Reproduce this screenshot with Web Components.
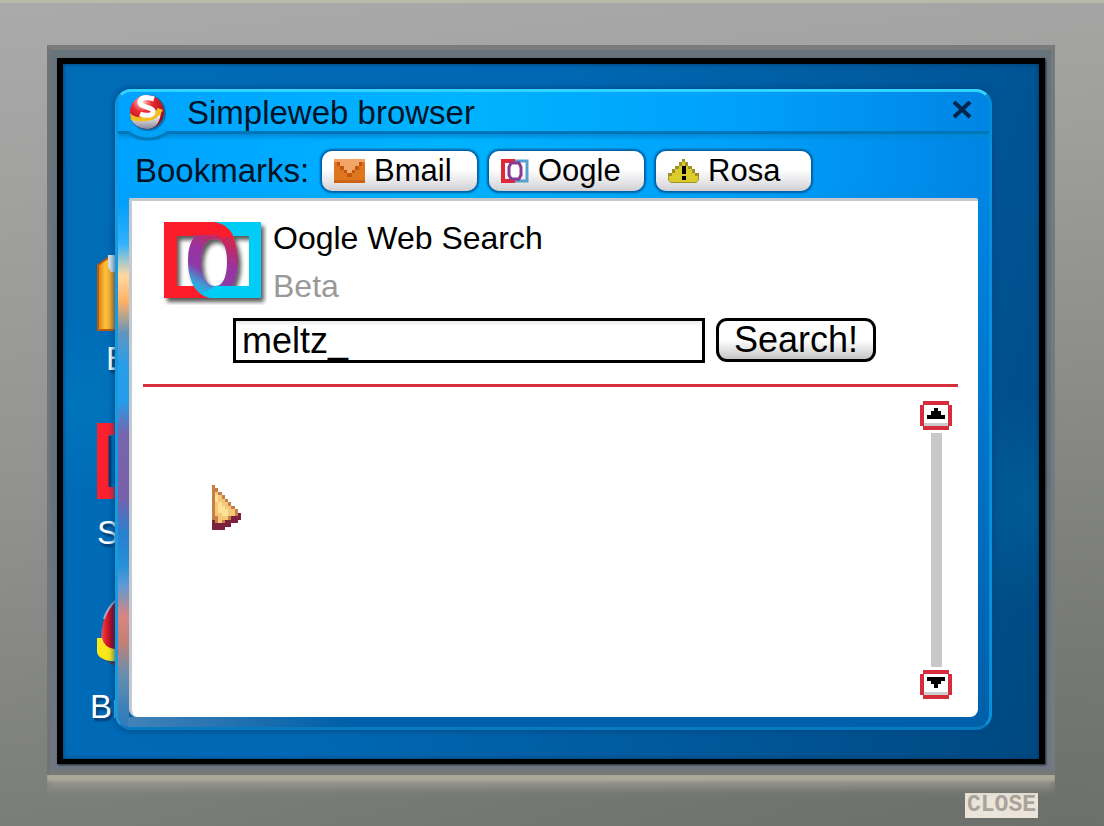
<!DOCTYPE html>
<html lang="en">
<head>
<meta charset="utf-8">
<title>Simpleweb browser</title>
<style>
  html { height: 100%; }
  body { margin: 0; min-height: 100%; display: flex; font-family: "Liberation Sans", Arial, sans-serif; color: #000; }
  retro-monitor { flex: 1; min-width: 0; }
</style>
</head>
<body>
<retro-monitor>
  <desk-top>
    <desktop-icons slot="icons"></desktop-icons>
    <browser-window heading="Simpleweb browser">
      <bookmark-link slot="bookmarks" icon="mail">Bmail</bookmark-link>
      <bookmark-link slot="bookmarks" icon="oogle">Oogle</bookmark-link>
      <bookmark-link slot="bookmarks" icon="warn">Rosa</bookmark-link>
      <oogle-search></oogle-search>
    </browser-window>
  </desk-top>
</retro-monitor>

<script>
function define(name, html, setup) {
  customElements.define(name, class extends HTMLElement {
    constructor() {
      super();
      this.attachShadow({ mode: 'open' }).innerHTML = html;
    }
    connectedCallback() { if (setup) setup(this, this.shadowRoot); }
  });
}

/* Grey monitor housing with the recessed screen and its close key */
define('retro-monitor', `
<style>
  :host { display: flex; flex-direction: column; box-sizing: border-box; padding: 42px 49px 0 47px; border-top: 3px solid #bab9ac;
    background: radial-gradient(ellipse at 90% 95%, #5f625f55, transparent 60%), linear-gradient(174deg, #aaa 0%, #a2a2a1 18%, #939492 50%, #7e807c 82%, #737571 100%); }
  .rim { flex: 1; display: flex; box-sizing: border-box; border: solid; border-width: 5px 4px; border-color: #797c7b #747b7e #767978 #707477;
    background: linear-gradient(#68747b, #64717c 60%, #6f7882); padding: 8px 6px 6px;
    box-shadow: 0 6px 2px #aaa899, 0 12px 10px #9a9a90; clip-path: inset(0 0 -26px 0); }
  .glass { flex: 1; min-width: 0; display: flex; border: 6px solid #000; border-bottom-width: 5px; box-shadow: 1px 1px 2px #1b2731; }
  footer { display: flex; justify-content: flex-end; padding: 18px 17px 8px; }
  button { border: 0; padding: 0 2px; height: 25px; background: #eae4da; color: #aaa39a; font: bold 23px/25px "Liberation Mono", monospace; }
</style>
<div class="rim"><div class="glass"><slot></slot></div></div>
<footer><button type="button">CLOSE</button></footer>`);

/* Blue wallpaper: a strip of shortcuts, then the open window */
define('desk-top', `
<style>
  :host { flex: 1; display: flex; min-width: 0; padding: 25px 47px 29px 0;
    background:
      radial-gradient(ellipse 240px 90px at 0 340px, #0088c455, transparent),
      radial-gradient(ellipse 130px 110px at 100% 440px, #0080b844, transparent),
      linear-gradient(110deg, #006cb8 0%, #0068b4 40%, #00599c 70%, #004880 100%);
    box-shadow: inset 0 0 4px #003868; }
  .icons { width: 52px; flex: none; overflow: hidden; }
  .main { flex: 1; min-width: 0; display: flex; }
</style>
<div class="icons"><slot name="icons"></slot></div>
<div class="main"><slot></slot></div>`);

define('desktop-icons', `
<style>
  :host { display: flex; flex-direction: column; padding: 164px 0 0; }
  figure { margin: 0; height: 174px; padding-left: 34px; }
  figure:last-child { height: auto; }
  svg { display: block; width: 100px; height: 84px; overflow: visible; }
  figcaption { font-size: 33px; line-height: 38px; margin-top: 3px; color: #fff; text-shadow: 2px 3px 2px #003a70; white-space: nowrap; }
  .a { padding-left: 9px; }
  .c { margin-left: -7px; }
</style>
<figure>
  <svg viewBox="0 0 100 84" aria-hidden="true">
    <defs><linearGradient id="g"><stop offset="0" stop-color="#d97812"/><stop offset=".08" stop-color="#ffc23a"/><stop offset=".2" stop-color="#ed8a18"/></linearGradient></defs>
    <path d="M1 12l10-7h80v72H1z" fill="url(#g)" stroke="#b85b0b" stroke-width="2"/>
    <path d="M11 2h70v17H14l-3-5z" fill="#dde3e8"/>
  </svg>
  <figcaption class="a">B</figcaption>
</figure>
<figure>
  <svg viewBox="0 0 100 84" aria-hidden="true"><path d="M6 2h52v64H6z" fill="none" stroke="#fa202d" stroke-width="12"/><path d="M13 9v51" stroke="#073c70" stroke-width="3"/></svg>
  <figcaption>S</figcaption>
</figure>
<figure>
  <svg viewBox="0 0 100 84" aria-hidden="true">
    <defs><linearGradient id="r"><stop offset="0" stop-color="#c95b70"/><stop offset=".12" stop-color="#e3202c"/><stop offset=".3" stop-color="#9f0018"/></linearGradient></defs>
    <path d="M18 0Q4 14 4 40v14h40V0z" fill="url(#r)"/>
    <path d="M18 0Q10 8 7 18" stroke="#9cacc6" stroke-width="2" fill="none"/>
    <path d="M0 37h5q2 10 13 11h20v12H14Q0 58 0 50z" fill="#fbe51b"/>
    <path d="M3 56q6 5 12 5h20v3H16z" fill="#7b2b14"/>
  </svg>
  <figcaption class="c">Br</figcaption>
</figure>`);

define('browser-window', `
<style>
  :host { flex: 1; min-width: 0; display: flex; flex-direction: column; box-sizing: border-box; border: 3px solid; padding: 0 11px 10px;
    border-color: #32d6ff #0890da #087abf #179be0; border-radius: 16px; box-shadow: 0 0 5px 2px #004681aa;
    background:
      linear-gradient(transparent 14%, #0078ca22 20%, #005fa8ff 100%),
      linear-gradient(90deg, #00a2ff, #00b4ff 38%, #00a0fa 72%, #0084e4); position: relative; }
  .glow { position: absolute; left: 0; top: 110px; bottom: 0; width: 11px; border-radius: 0 0 0 12px;
    background: linear-gradient(#22b0ff00 0, #32b2ff 8%, #ffd9a0 14%, #ffb066 19%, #6095bd 25%, #289eea 31%, #259cea 38%, #7566ae 44%, #7960a9 56%, #2880d0 63%, #248fd7 69%, #5d9bd5 73%, #da8580 79%, #c08078 84%, #668faf 90%, #347dba 98%); }
  .foot { position: absolute; left: 10px; bottom: 0; height: 10px; width: 220px; background: linear-gradient(90deg, #4282b8, #1a71b400); }
  header { display: flex; align-items: center; height: 39px; margin: 0 -11px; border-bottom: 3px solid #0076b8; box-shadow: 0 3px 4px #0088d6; }
  .badge { width: 44px; height: 47px; margin: 2px 0 0 8px; flex: none; align-self: flex-start; position: relative; }
  h1 { flex: 1; margin: 2px 0 0 17px; font-size: 33px; font-weight: normal; line-height: 38px; color: #001226; white-space: nowrap; }
  header button { border: 0; background: none; padding: 0; width: 20px; height: 18px; margin: 0 16px 4px 0; }
  header button svg { display: block; width: 20px; height: 18px; }
  nav { display: flex; align-items: center; gap: 12px; height: 40px; padding: 17px 0 7px 6px; white-space: nowrap; }
  nav span { font-size: 33px; color: #001226; width: 175px; }
  main { flex: 1; display: flex; border: 2px solid #c5c9ce; border-width: 3px 0 0 3px; border-radius: 2px 2px 8px 8px; background: #fff; position: relative; }
</style>
<div class="glow"></div><div class="foot"></div>
<header>
  <svg class="badge" viewBox="0 0 44 47" aria-hidden="true">
    <defs><radialGradient id="b" cx=".35" cy=".2" r=".85"><stop offset="0" stop-color="#ffe3dc"/><stop offset=".35" stop-color="#ec2832"/><stop offset="1" stop-color="#8f0715"/></radialGradient>
    <linearGradient id="w" x2="0" y2="1"><stop offset=".35" stop-color="#f3eef0"/><stop offset="1" stop-color="#85899a"/></linearGradient></defs>
    <path d="M1 35Q5 44 21 44T43 35z" fill="#00a2f6"/><path d="M2 38Q10 45 22 45T42 38" fill="none" stroke="#007bbd" stroke-width="3"/>
    <circle cx="22" cy="19" r="18" fill="#0870b3"/>
    <circle cx="21" cy="18" r="17" fill="url(#b)"/>
    <path d="M5 25q6 0 13-1 11-1 17-9 0 19-14 20Q9 34 5 25z" fill="url(#w)"/>
    <path d="M4 19q4 5 13 4 8 0 15-9l5 2q-6 11-16 11-10 1-16-1z" fill="#f6bd1e"/>
    <path d="M28 5Q15 1 14 8c0 6 14 5 13 10 0 4-8 4-13 2" fill="none" stroke="#fff" stroke-width="5"/>
  </svg>
  <h1></h1>
  <button type="button" aria-label="Close window"><svg viewBox="0 0 20 18"><path d="M1 1l16 15M17 1L1 16" stroke="#03254a" stroke-width="4"/></svg></button>
</header>
<nav aria-label="Bookmarks"><span>Bookmarks:</span><slot name="bookmarks"></slot></nav>
<main><slot></slot></main>`, (el, root) => { root.querySelector('h1').textContent = el.getAttribute('heading'); });

const icons = {
  mail: `<svg viewBox="0 0 31 24" width="31" height="24"><path fill="#dd761f" d="M0 0h31v24H0z"/><path fill="#c4560c" d="M3 3h3v4h4v4h3v3h5v-3h3V7h4V3h3v4h-3v4h-4v3h-3v4h-5v-4h-3v-3H6V7H3z"/><path fill="#f2a566" d="M0 0h31v3h-6v4h-4v4h-3v3h-5v-3h-3V7H6V3H0z"/><path fill="#b94f0c" d="M0 21h31v3H0z" opacity=".5"/></svg>`,
  oogle: `<svg viewBox="0 0 28 24" width="28" height="24"><path d="M14 2H2v20h12" fill="none" stroke="#e12837" stroke-width="4"/><path d="M14 2h12v20H14" fill="none" stroke="#58a1cf" stroke-width="3"/><path d="M10 4h8l2 4v8l-2 4h-8l-2-4V8z" fill="#fff" stroke="#8e3895" stroke-width="3"/></svg>`,
  warn: `<svg viewBox="0 0 31 24" width="31" height="24"><path d="M14 0h3v3h3v4h4v3h3v4h4v7l-3 3H3l-3-3v-7h4v-4h3V7h4V3h3z" fill="#9b9124"/><path d="M14 3h3v4h3v3h4v4h3v3h3v4l-2 2H3l-2-2v-4h3v-3h3v-4h4V7h3z" fill="#dccb2c"/><path d="M14 7h4v8h-4zm0 10h4v4h-4z" fill="#000"/></svg>`
};
define('bookmark-link', `
<style>
  :host { display: block; }
  a { display: flex; align-items: center; gap: 9px; box-sizing: border-box; width: 155px; height: 40px; padding-left: 12px; border-radius: 10px;
    background: linear-gradient(#fff 45%, #e8e7ea 75%, #cfced3); box-shadow: 0 0 2px 2px #005fa5; color: #000; text-decoration: none; font-size: 31px; line-height: 38px; }
  i { display: block; flex: none; } svg { display: block; }
</style>
<a href="#"><i></i><span><slot></slot></span></a>`, (el, root) => { root.querySelector('i').innerHTML = icons[el.getAttribute('icon')]; });

define('oogle-search', `
<style>
  :host { flex: 1; min-width: 0; display: flex; flex-direction: column; padding: 19px 20px 18px 11px; }
  .brand { display: flex; gap: 6px; padding-left: 20px; height: 84px; }
  .brand svg { width: 104px; height: 84px; flex: none; margin-top: 1px; }
  h2, p { margin: 0; font-size: 32px; font-weight: normal; line-height: 36px; white-space: nowrap; }
  p { margin-top: 12px; color: #999; }
  form { display: flex; gap: 11px; margin: 14px 82px 21px 90px; }
  input { flex: 1; width: 0; min-width: 0; box-sizing: border-box; height: 45px; border: 3px solid #000; border-radius: 0; padding: 0 6px; background: linear-gradient(#e9e9e9, #fff 5px); color: #000; font: 36px "Liberation Sans", Arial, sans-serif; outline: 0; }
  form button { box-sizing: border-box; width: 160px; height: 44px; border: 3px solid #000; border-radius: 11px; padding: 0; background: linear-gradient(#fff 50%, #ddd 80%, #c4c4c4); color: #000; font: 36px/36px "Liberation Sans", Arial, sans-serif; }
  hr { width: 100%; height: 3px; margin: 0; border: 0; background: #d6303d; }
  .results { flex: 1; display: flex; justify-content: flex-end; position: relative; padding: 14px 6px 0 0; }
  .bar { display: flex; flex-direction: column; align-items: center; gap: 3px; }
  .track { flex: 1; width: 11px; background: #c8c8c8; }
  .bar button { display: block; width: 32px; height: 29px; padding: 0; border: 0; background: none; }
  .bar svg { display: block; width: 32px; height: 29px; }
  .pointer { position: absolute; left: 69px; top: 98px; width: 29px; height: 45px; }
</style>
<div class="brand">
  <svg viewBox="0 0 104 84" aria-hidden="true">
    <defs>
      <linearGradient id="o" x1=".7" y1="0" x2=".3" y2="1"><stop offset="0" stop-color="#f51d31"/><stop offset=".28" stop-color="#b22e74"/><stop offset=".45" stop-color="#9933a0"/><stop offset=".68" stop-color="#8c3aa5"/><stop offset=".85" stop-color="#409bd5"/><stop offset="1" stop-color="#05c7f1"/></linearGradient>
      <filter id="s" x="-20%" y="-20%" width="140%" height="150%"><feDropShadow dx="3" dy="4" stdDeviation="2" flood-opacity=".65"/></filter>
    </defs>
    <g filter="url(#s)">
      <path d="M48 1h50v76H46V65h40V15H48z" fill="#05cdf5"/>
      <path d="M1 1h48q16 1 22 16L60 18Q54 13 48 15H14v50h22l12 12H1z" fill="#fc1e2a"/>
      <path fill-rule="evenodd" d="M49 3c16 0 26 15 26 37S65 77 50 77 25 62 25 40 34 10 49 3zm2 15c-8 0-13 9-13 22s5 25 14 25 12-11 12-25-4-22-13-22z" fill="url(#o)"/>
      <path d="M1 1h48q14 1 21 13l-10 3Q54 12 46 14H14v10H1z" fill="#fc1e2a"/>
      <path d="M52 65h46v12H50q-6 0-11-4z" fill="#05cdf5"/>
    </g>
  </svg>
  <div><h2>Oogle Web Search</h2><p>Beta</p></div>
</div>
<form onsubmit="return false">
  <input type="text" aria-label="Search the web" value="meltz_" spellcheck="false">
  <button>Search!</button>
</form>
<hr>
<div class="results">
  <svg class="pointer" viewBox="0 0 9 13" shape-rendering="crispEdges" preserveAspectRatio="none" aria-hidden="true">
    <path d="M0 0h1v1h1v1h1v1h1v1h1v1h1v1h1v1h1v1h1v2H8v1H6v1H4v1H0z" fill="#7d203d"/>
    <path d="M0 0h1v1h1v1h1v1h1v1h1v1h1v1h1v1h1v2H6v1H4v1H1v-1H0z" fill="#c57f48"/>
    <path d="M1 2h1v1h1v1h1v1h1v1h1v1h1v2H5v1H3v1H2V9H1z" fill="#f7c779"/>
    <path d="M1 3h1v2h1v1h1v1h1v2H3V8H2V5H1z" fill="#ffe19a"/>
  </svg>
  <div class="bar">
    <button type="button" aria-label="Scroll up"><svg viewBox="0 0 32 29" shape-rendering="crispEdges"><path d="M3 3h26v23H3z" fill="#fff"/><path d="M3 22h26v4H3z" fill="#ccc"/><path d="M3 0h26v4H3zM0 4h4v21H0zM28 4h4v21h-4zM3 25h26v4H3z" fill="#d62c3b"/><path d="M14 7h4v3h3v4h4v4H7v-4h4v-4h3z"/></svg></button>
    <div class="track"></div>
    <button type="button" aria-label="Scroll down"><svg viewBox="0 0 32 29" shape-rendering="crispEdges"><path d="M3 3h26v23H3z" fill="#fff"/><path d="M3 22h26v4H3z" fill="#ccc"/><path d="M3 0h26v4H3zM0 4h4v21H0zM28 4h4v21h-4zM3 25h26v4H3z" fill="#d62c3b"/><path d="M7 7h18v4h-4v3h-3v4h-4v-4h-3v-3H7z"/></svg></button>
  </div>
</div>`);
</script>
</body>
</html>
